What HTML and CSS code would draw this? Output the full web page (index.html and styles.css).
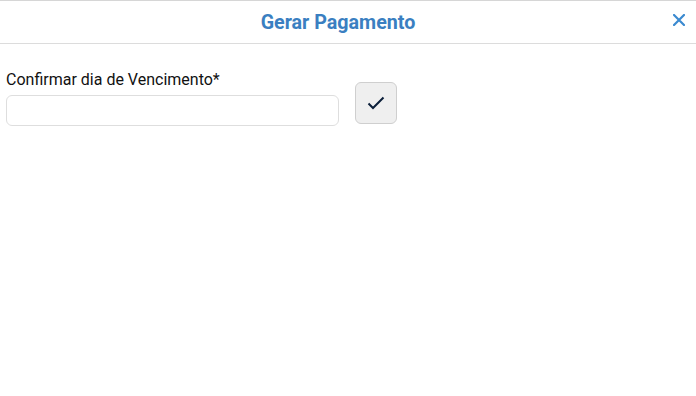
FILE: index.html
```html
<!DOCTYPE html>
<html lang="pt">
<head>
    <meta charset="UTF-8">
    <meta name="viewport" content="width=device-width, initial-scale=1.0">
    <title>Gerar Pagamento</title>
    <link rel="stylesheet" href="styles.css">
</head>
<body>
    <div class="modal">
        <div class="modal-header">
            <h2>Gerar Pagamento</h2>
            <button type="button" class="close" aria-label="Fechar">
                <svg width="12" height="12" viewBox="0 0 12 12">
                    <path d="M1 1 L11 11 M11 1 L1 11" stroke="#3b8ad0" stroke-width="2.2" stroke-linecap="square"/>
                </svg>
            </button>
        </div>
        <div class="modal-body">
            <form class="form-row">
                <div class="field">
                    <label for="vencimento">Confirmar dia de Vencimento*</label>
                    <input type="text" id="vencimento" name="vencimento">
                </div>
                <button type="submit" class="confirm" aria-label="Confirmar">
                    <svg width="18" height="14" viewBox="0 0 18 14">
                        <path d="M1.5 7.5 L6 12 L16.5 1.5" fill="none" stroke="#0b1f3a" stroke-width="2"/>
                    </svg>
                </button>
            </form>
        </div>
    </div>
</body>
</html>
```

FILE: styles.css
```css
body {
    font-family: Roboto, "Liberation Sans", sans-serif;
    background-color: #fff;
    margin: 0;
    padding: 0;
}
.modal {
    border-top: 1px solid #d6d6d6;
}
.modal-header {
    position: relative;
    height: 42px;
    border-bottom: 1px solid #dcdcdc;
    display: flex;
    align-items: center;
    justify-content: center;
    padding-right: 20px;
}
.modal-header h2 {
    margin: 0;
    font-size: 19.7px;
    font-weight: 700;
    color: #3a7fc1;
}
.close {
    position: absolute;
    right: 10px;
    top: 12px;
    background: none;
    border: none;
    padding: 0;
    width: 14px;
    height: 14px;
    display: flex;
    align-items: center;
    justify-content: center;
    cursor: pointer;
}
.modal-body {
    padding: 26px 6px;
}
.form-row {
    display: flex;
    align-items: flex-start;
}
.field {
    width: 333px;
}
label {
    display: block;
    font-size: 16px;
    line-height: 19px;
    color: #111;
    margin-bottom: 6px;
}
input {
    display: block;
    box-sizing: border-box;
    width: 100%;
    height: 31px;
    border: 1px solid #dedede;
    border-radius: 6px;
    padding: 4px 8px;
    font-size: 15px;
}
.confirm {
    margin-top: 12px;
    margin-left: 16px;
    width: 42px;
    height: 42px;
    background-color: #efefef;
    border: 1px solid #cfcfcf;
    border-radius: 6px;
    display: flex;
    align-items: center;
    justify-content: center;
    padding: 0;
    cursor: pointer;
}
```
